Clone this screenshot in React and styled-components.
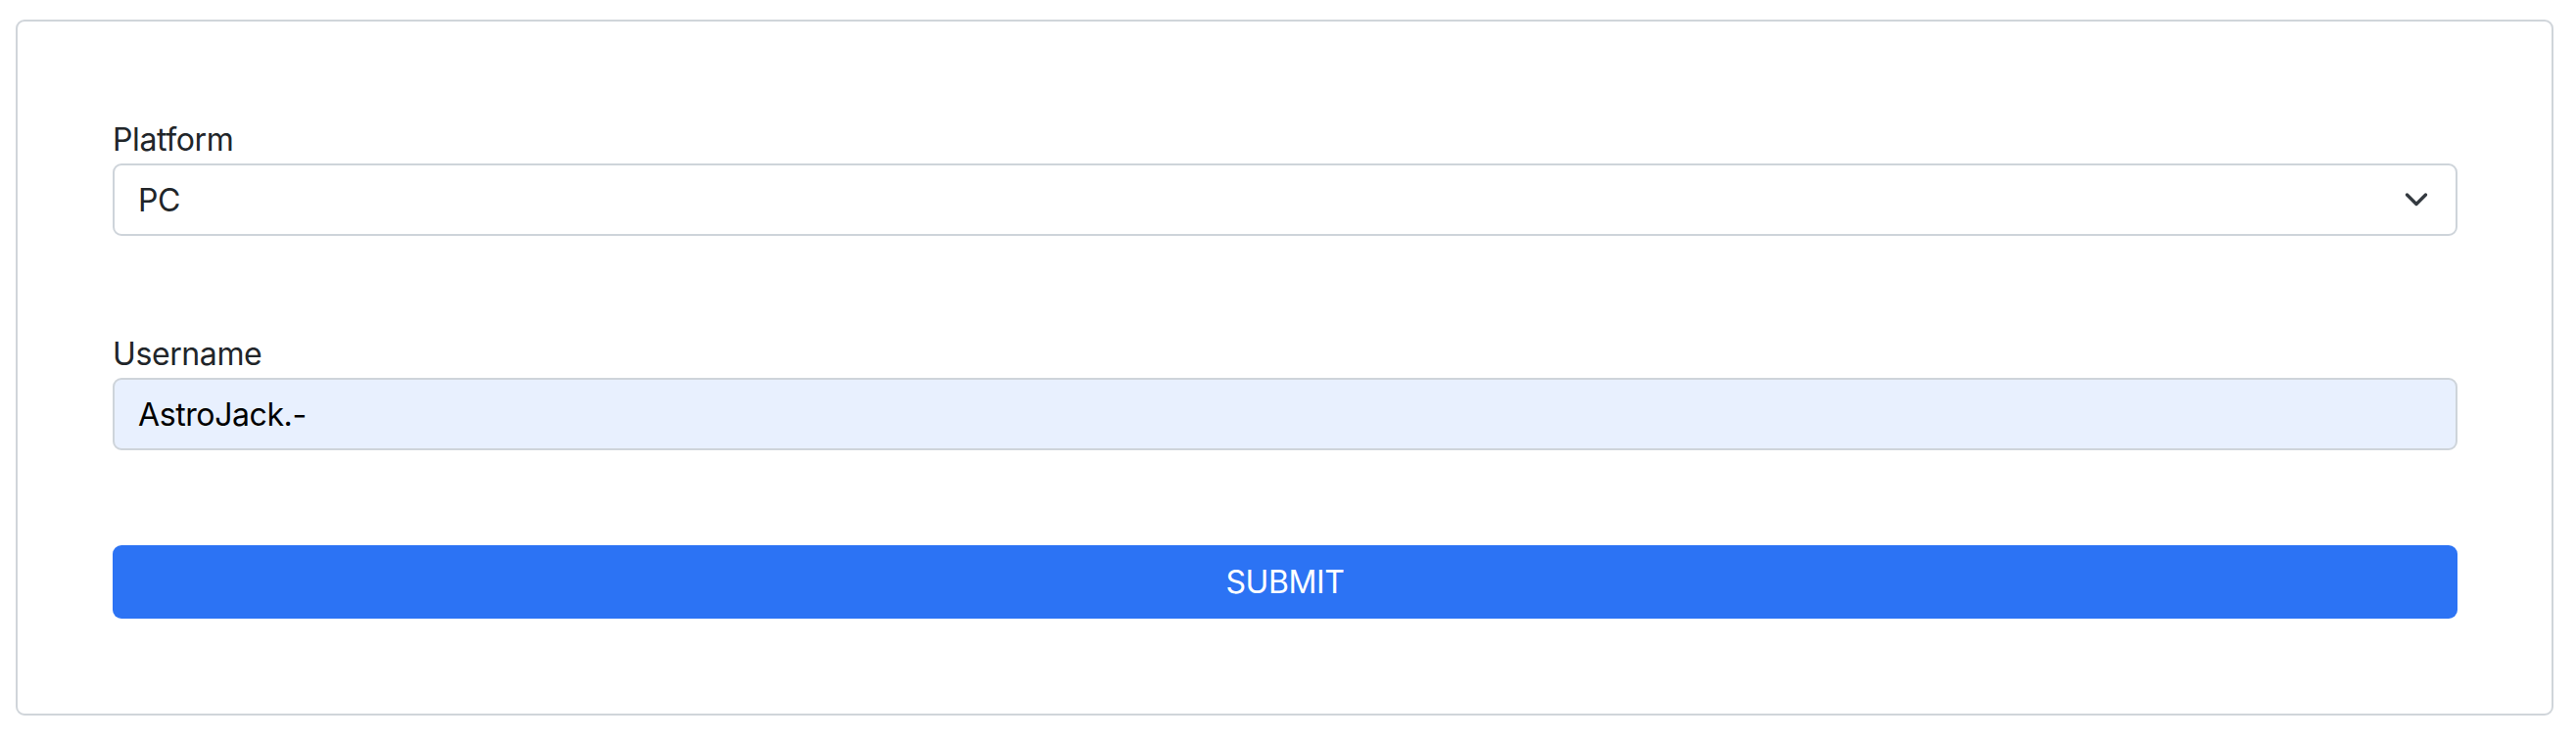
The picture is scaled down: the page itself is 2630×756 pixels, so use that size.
import React from 'react'
import styled, { createGlobalStyle } from 'styled-components'

const GlobalStyle = createGlobalStyle`
  html, body {
    margin: 0;
    padding: 0;
    background: #ffffff;
  }
  body {
    font-family: Inter, 'Noto Sans', 'Liberation Sans', sans-serif;
    color: #212529;
    letter-spacing: -0.4px;
  }
`

const Page = styled.div`
  padding: 20px 23px 0 16px;
`

const Card = styled.form`
  border: 2px solid #d0d5da;
  border-radius: 9px;
  padding: 97px 96px 97px 97px;
  display: flex;
  flex-direction: column;
  gap: 97px;
`

const Field = styled.div`
  display: flex;
  flex-direction: column;
`

const Label = styled.label`
  font-size: 32px;
  line-height: 48px;
  color: #212529;
`

const SelectBox = styled.div`
  height: 74px;
  box-sizing: border-box;
  border: 2px solid #ced4da;
  border-radius: 9px;
  background: #fff;
  display: flex;
  align-items: center;
  justify-content: space-between;
  padding: 0 28px 0 24px;
  font-size: 32px;
  color: #212529;
`

const Input = styled.input`
  height: 74px;
  box-sizing: border-box;
  border: 2px solid #ced4da;
  border-radius: 9px;
  background: #e8f0fe;
  padding: 0 24px;
  font-family: inherit;
  font-size: 32px;
  letter-spacing: inherit;
  color: #000;
  outline: none;
`

const Button = styled.button`
  height: 75px;
  border: none;
  border-radius: 9px;
  background: #2c73f4;
  color: #fff;
  font-family: inherit;
  font-size: 32px;
  letter-spacing: inherit;
  cursor: pointer;
`

const Chevron = () => (
  <svg width='24' height='16' viewBox='0 0 24 16' fill='none'>
    <polyline
      points='2.5,3 12,12.5 21.5,3'
      stroke='#343a40'
      strokeWidth='3.4'
      strokeLinecap='round'
      strokeLinejoin='round'
    />
  </svg>
)

const App = () => {
  return (
    <>
      <GlobalStyle />
      <Page>
        <Card onSubmit={(e) => e.preventDefault()}>
          <Field>
            <Label>Platform</Label>
            <SelectBox>
              <span>PC</span>
              <Chevron />
            </SelectBox>
          </Field>
          <Field>
            <Label>Username</Label>
            <Input type='text' value='AstroJack.-' readOnly />
          </Field>
          <Button type='submit'>SUBMIT</Button>
        </Card>
      </Page>
    </>
  )
}

export default App
